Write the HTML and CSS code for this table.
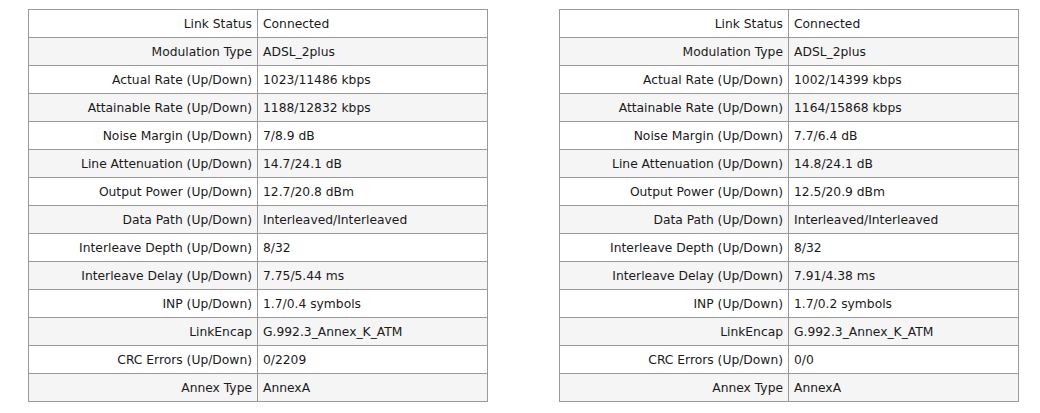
FILE: index.html
```html
<!DOCTYPE html>
<html>
<head>
<meta charset="utf-8">
<link rel="stylesheet" href="styles.css">
</head>
<body>
<div class="page">
  <table class="info">
    <tr><td class="lbl">Link Status</td><td class="val">Connected</td></tr>
    <tr><td class="lbl">Modulation Type</td><td class="val">ADSL_2plus</td></tr>
    <tr><td class="lbl">Actual Rate (Up/Down)</td><td class="val">1023/11486 kbps</td></tr>
    <tr><td class="lbl">Attainable Rate (Up/Down)</td><td class="val">1188/12832 kbps</td></tr>
    <tr><td class="lbl">Noise Margin (Up/Down)</td><td class="val">7/8.9 dB</td></tr>
    <tr><td class="lbl">Line Attenuation (Up/Down)</td><td class="val">14.7/24.1 dB</td></tr>
    <tr><td class="lbl">Output Power (Up/Down)</td><td class="val">12.7/20.8 dBm</td></tr>
    <tr><td class="lbl">Data Path (Up/Down)</td><td class="val">Interleaved/Interleaved</td></tr>
    <tr><td class="lbl">Interleave Depth (Up/Down)</td><td class="val">8/32</td></tr>
    <tr><td class="lbl">Interleave Delay (Up/Down)</td><td class="val">7.75/5.44 ms</td></tr>
    <tr><td class="lbl">INP (Up/Down)</td><td class="val">1.7/0.4 symbols</td></tr>
    <tr><td class="lbl">LinkEncap</td><td class="val">G.992.3_Annex_K_ATM</td></tr>
    <tr><td class="lbl">CRC Errors (Up/Down)</td><td class="val">0/2209</td></tr>
    <tr><td class="lbl">Annex Type</td><td class="val">AnnexA</td></tr>
  </table>
  <table class="info">
    <tr><td class="lbl">Link Status</td><td class="val">Connected</td></tr>
    <tr><td class="lbl">Modulation Type</td><td class="val">ADSL_2plus</td></tr>
    <tr><td class="lbl">Actual Rate (Up/Down)</td><td class="val">1002/14399 kbps</td></tr>
    <tr><td class="lbl">Attainable Rate (Up/Down)</td><td class="val">1164/15868 kbps</td></tr>
    <tr><td class="lbl">Noise Margin (Up/Down)</td><td class="val">7.7/6.4 dB</td></tr>
    <tr><td class="lbl">Line Attenuation (Up/Down)</td><td class="val">14.8/24.1 dB</td></tr>
    <tr><td class="lbl">Output Power (Up/Down)</td><td class="val">12.5/20.9 dBm</td></tr>
    <tr><td class="lbl">Data Path (Up/Down)</td><td class="val">Interleaved/Interleaved</td></tr>
    <tr><td class="lbl">Interleave Depth (Up/Down)</td><td class="val">8/32</td></tr>
    <tr><td class="lbl">Interleave Delay (Up/Down)</td><td class="val">7.91/4.38 ms</td></tr>
    <tr><td class="lbl">INP (Up/Down)</td><td class="val">1.7/0.2 symbols</td></tr>
    <tr><td class="lbl">LinkEncap</td><td class="val">G.992.3_Annex_K_ATM</td></tr>
    <tr><td class="lbl">CRC Errors (Up/Down)</td><td class="val">0/0</td></tr>
    <tr><td class="lbl">Annex Type</td><td class="val">AnnexA</td></tr>
  </table>
</div>
</body>
</html>
```
FILE: styles.css
```css
html, body {
  margin: 0;
  padding: 0;
  background: #ffffff;
}
body {
  font-family: "DejaVu Sans", Verdana, sans-serif;
  font-size: 12.3px;
  color: #1a1a1a;
}
.page {
  display: flex;
  gap: 71px;
  padding: 9px 0 0 28px;
}
.info {
  border-collapse: collapse;
  width: 460px;
  table-layout: fixed;
}
.info td {
  border: 1px solid #999999;
  height: 28px;
  padding: 0 5px;
  box-sizing: border-box;
  vertical-align: middle;
  white-space: nowrap;
}
.info tr:nth-child(even) td {
  background: #f5f5f5;
}
.info .lbl {
  width: 229px;
  text-align: right;
}
.info .val {
  text-align: left;
}
```
